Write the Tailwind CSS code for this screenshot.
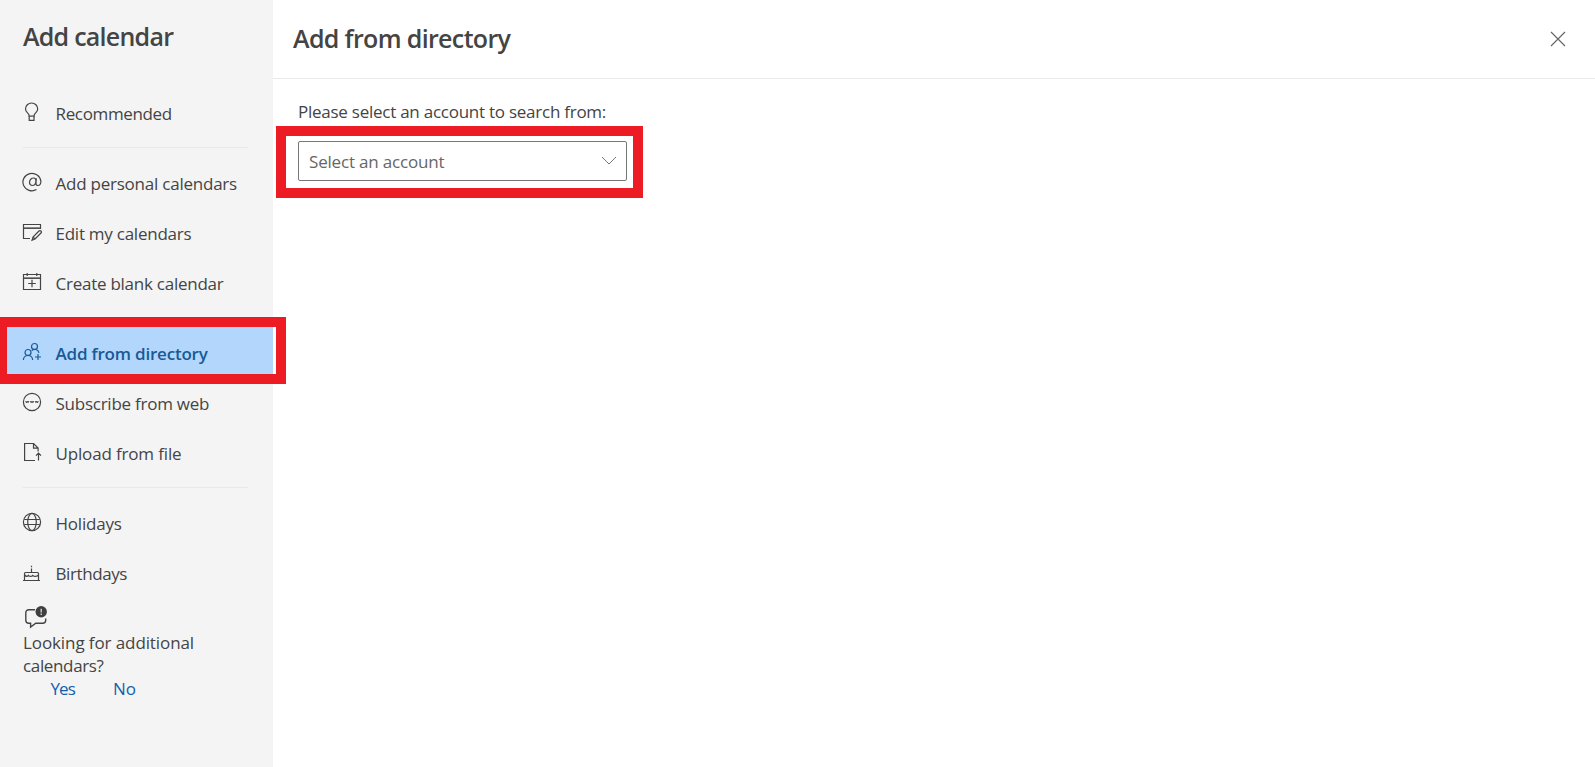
<!DOCTYPE html>
<html lang="en">
<head>
<meta charset="utf-8">
<title>Add calendar</title>
<script src="https://cdn.jsdelivr.net/npm/@tailwindcss/browser@4"></script>
</head>
<body class="relative flex h-[767px] overflow-hidden bg-white font-['Open_Sans',sans-serif] text-[17px] text-[#444]">
<aside class="flex h-full w-[273px] shrink-0 flex-col bg-[#f4f4f4]">
  <h1 class="h-[87px] pl-[23px] pt-[18px] text-[25px] leading-[36px] font-semibold whitespace-nowrap"><span class="tracking-[-0.75px]">Add calendar</span></h1>
  <nav class="flex flex-col whitespace-nowrap">
    <a class="flex h-[50px] items-center gap-[13.5px] pl-[22px]">
      <svg class="size-5 shrink-0" viewBox="0 0 20 20" fill="none" stroke="#444" stroke-width="1.2"><path d="M7 15.200V13C6.300 11 3.500 10 3.500 6.900a6.100 5.900 0 0 1 12.200 0C15.700 10 12.900 11 12.200 13v2.200M7 14.200h5.200M7.200 15v3.300h4.800V15"/></svg>
      <span class="pt-[4px] tracking-[-0.35px]">Recommended</span></a>
    <hr class="mx-[23px] my-[9.500px] mr-[25px] border-[#e8e8e8]">
    <a class="flex h-[50px] items-center gap-[13.5px] pl-[22px]">
      <svg class="size-5 shrink-0" viewBox="0 0 20 20" fill="none" stroke="#444" stroke-width="1.2"><path d="M14.500 17.600A9 8.700 0 1 1 18.900 9.300c0 2.600-1.200 4.200-3 4.200-1.400 0-2-.9-1.900-2.300l.3-5M13.900 9.300c-.1 2.600-1.500 4.200-3.600 4.200-1.700 0-2.800-1.200-2.800-3 0-2.600 1.800-4.500 4.100-4.500 1.600 0 2.400 1.200 2.300 3.300Z"/></svg>
      <span class="pt-[4px] tracking-[-0.23px]">Add personal calendars</span></a>
    <a class="flex h-[50px] items-center gap-[13.5px] pl-[22px]">
      <svg class="size-5 shrink-0" viewBox="0 0 20 20" fill="none" stroke="#444" stroke-width="1.2"><path d="M8 16.500H1.500v-14h17V7M1.500 6.500h17M10 18.300l1-3.300 6-6a1.300 1.300 0 0 1 2 2l-6 6-3 1.300ZM11 15l2 2"/><path d="M2 5.600h16" stroke="#888"/></svg>
      <span class="pt-[4px] tracking-[-0.25px]">Edit my calendars</span></a>
    <a class="flex h-[50px] items-center gap-[13.5px] pl-[22px]">
      <svg class="size-5 shrink-0" viewBox="0 0 20 20" fill="none" stroke="#444" stroke-width="1.2"><path d="M1.500 2.500h17v15h-17ZM1.500 6.500h17M5.200 1v3M14.800 1v3M10 7.800v7.400M6.200 11.500h7.600"/><path d="M2 5.600h16" stroke="#888"/></svg>
      <span class="pt-[4px] tracking-[-0.25px]">Create blank calendar</span></a>
    <a class="mt-5 flex h-[50px] items-center gap-[13.5px] bg-[#b3d6fc] pl-[22px] text-[#185a96]">
      <svg class="size-5 shrink-0" viewBox="0 0 20 20" fill="none" stroke="currentColor" stroke-width="1.200"><circle cx="12.500" cy="4.500" r="3"/><circle cx="6" cy="10.500" r="3"/><path d="M1.400 18a4.600 4.600 0 0 1 9.200 0M9.700 8.500a4.400 4.400 0 0 1 7.300 2.300M16 12v6M13 15h6"/></svg>
      <span class="pt-[4px] font-semibold tracking-[-0.2px]">Add from directory</span></a>
    <a class="flex h-[50px] items-center gap-[13.5px] pl-[22px]">
      <svg class="size-5 shrink-0" viewBox="0 0 20 20" fill="none" stroke="#444" stroke-width="1.2"><circle cx="10" cy="10" r="8.600"/><path d="M3.600 9l.8 1.800.8-1.800.8 1.800.8-1.800M8.400 9l.8 1.800L10 9l.8 1.800.8-1.800M13.200 9l.8 1.800.8-1.800.8 1.800.8-1.800" stroke-width=".9"/></svg>
      <span class="pt-[4px] tracking-[-0.25px]">Subscribe from web</span></a>
    <a class="flex h-[50px] items-center gap-[13.5px] pl-[22px]">
      <svg class="size-5 shrink-0" viewBox="0 0 20 20" fill="none" stroke="#444" stroke-width="1.2"><path d="M13 18.500H2.600v-17h9l4.500 4.600V9.500M11.500 1.500v4.700h4.600M16.500 18.500v-7.300M14 13.600l2.500-2.500 2.500 2.500"/></svg>
      <span class="pt-[4px] tracking-[-0.16px]">Upload from file</span></a>
    <hr class="mx-[23px] my-[9.500px] mr-[25px] border-[#e8e8e8]">
    <a class="flex h-[50px] items-center gap-[13.5px] pl-[22px]">
      <svg class="size-5 shrink-0" viewBox="0 0 20 20" fill="none" stroke="#444" stroke-width="1.2"><circle cx="10" cy="10" r="8.600"/><ellipse cx="10" cy="10" rx="4.300" ry="8.600"/><path d="M2.200 7.500h15.600M2.200 12.500h15.600"/></svg>
      <span class="pt-[4px] tracking-[-0.2px]">Holidays</span></a>
    <a class="flex h-[50px] items-center gap-[13.5px] pl-[22px]">
      <svg class="size-5 shrink-0" viewBox="0 0 20 20" fill="none" stroke="#444" stroke-width="1.2"><path d="M1 18.500h17M2.500 18V11.500a1 1 0 0 1 1-1h12a1 1 0 0 1 1 1V18M9.500 10.500V6.500M9.500 3.800v1.500M2.700 13c1.500 1.800 2.700 1.800 3.700.3 1.500 1.500 3 1.500 4.300 0 1.500 1.500 4.300 1.500 5.600-.3"/></svg>
      <span class="pt-[4px] tracking-[-0.4px]">Birthdays</span></a>
  </nav>
  <section class="pl-[23px] pt-2 leading-[23px]">
    <svg class="mb-[2px] ml-[1px] h-6 w-6" viewBox="0 0 24 24" fill="none"><path d="M11 4.700H4.800A3 3 0 0 0 1.800 7.700v7.500a3 3 0 0 0 3 3H6.600v3.900l5.200-3.900h6.900a3 3 0 0 0 3-3v-1.700" stroke="#444" stroke-width="1.400"/><circle cx="17.200" cy="6.800" r="5.700" fill="#3f3f3f"/><path d="M17.200 3.700v3.700M17.200 8.600v1.300" stroke="#ddd" stroke-width="1.300"/></svg>
    <p class="whitespace-nowrap"><span class="tracking-[-0.100px]">Looking for additional</span><br><span class="tracking-[-0.350px]">calendars?</span></p>
    <div class="flex pl-[27.5px] text-[#1160ae]"><a class="w-[62.5px]"><span class="tracking-[-0.900px]">Yes</span></a><a>No</a></div>
  </section>
</aside>
<main class="min-w-0 flex-1">
  <header class="flex h-[79px] items-center justify-between border-b border-[#eaeaea] pr-[27px] pl-[20px]">
    <h2 class="pb-[2px] text-[25px] leading-9 font-semibold whitespace-nowrap"><span class="tracking-[-0.650px]">Add from directory</span></h2>
    <svg class="size-5" viewBox="0 0 20 20" fill="none" stroke="#666" stroke-width="1.200"><path d="M3 3l14 14M17 3L3 17"/></svg>
  </header>
  <div class="pt-[21px] pl-[25px]">
    <label class="block h-[41px] leading-6 whitespace-nowrap"><span class="tracking-[-0.250px]">Please select an account to search from:</span></label>
    <div class="flex h-10 w-[329px] items-center justify-between rounded-[2px] border border-[#777] pr-[9px] pl-[10px] text-[#666]">
      <span class="pt-px tracking-[-0.180px]">Select an account</span>
      <svg class="h-4 w-4" viewBox="0 0 16 16" fill="none" stroke="#777" stroke-width="1"><path d="M1 4l7 7 7-7"/></svg>
    </div>
  </div>
</main>
<div class="absolute top-[317px] left-[-3px] h-[67px] w-[289px] border-10 border-[#ed1c24]"><div class="absolute top-0 right-0 h-full w-[3px] bg-white"></div></div>
<div class="absolute top-[126px] left-[276px] h-[72px] w-[367px] border-10 border-[#ed1c24]"></div>
</body>
</html>
